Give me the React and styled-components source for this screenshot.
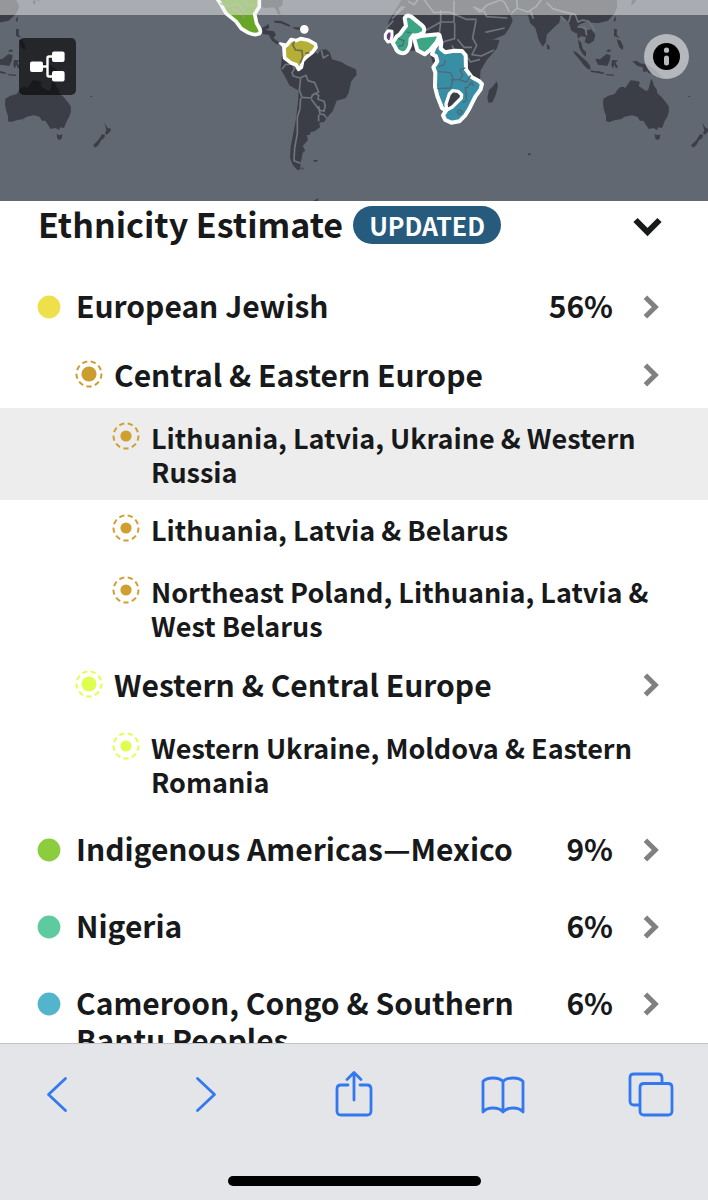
import React from "react";
import styled, { createGlobalStyle } from "styled-components";

const GlobalStyle = createGlobalStyle`
  *, *::before, *::after { box-sizing: border-box; }
  body {
    margin: 0;
    background: #fff;
    color: #17191b;
    font-family: "Noto Sans CJK SC", "Open Sans", sans-serif;
    font-weight: 700;
  }
  button {
    border: 0;
    margin: 0;
    padding: 0;
    background: none;
    color: inherit;
    font: inherit;
    text-align: left;
    cursor: pointer;
  }
  svg { display: block; }
`;

const Screen = styled.div`
  display: flex;
  flex-direction: column;
  height: 100vh;
  overflow: hidden;
`;

const MapPanel = styled.section`
  position: relative;
  flex: none;
  height: 201px;
  background: #616871;
`;

const MapDrawing = styled.svg`
  width: 100%;
  height: 100%;
`;

const StatusStrip = styled.div`
  position: absolute;
  inset: 0 0 auto 0;
  height: 15px;
  background: rgba(241, 240, 239, 0.5);
`;

const TreeButton = styled.button`
  position: absolute;
  top: 38px;
  left: 19px;
  display: grid;
  place-items: center;
  width: 57px;
  height: 57px;
  border-radius: 5px;
  background: rgba(10, 10, 12, 0.7);
`;

const InfoButton = styled.button`
  position: absolute;
  top: 34px;
  right: 19px;
  display: grid;
  place-items: center;
  width: 45px;
  height: 45px;
  border-radius: 50%;
  background: rgba(212, 214, 218, 0.72);
`;

const Results = styled.main`
  flex: 1;
  min-height: 0;
  overflow: hidden;
`;

const Header = styled.header`
  display: flex;
  align-items: center;
  gap: 10px;
  padding: 3px 46px 21px 38px;
`;

const Title = styled.h1`
  margin: 0 0 2px;
  font-size: 34px;
  line-height: 40px;
`;

const Badge = styled.span`
  padding: 0 16px;
  border-radius: 19px;
  background: #265b7e;
  color: #fff;
  font-size: 25px;
  line-height: 38px;
`;

const CollapseButton = styled.button`
  margin: 4px 0 0 auto;
`;

const List = styled.ul`
  margin: 0;
  padding: 0;
  list-style: none;
`;

const levels = {
  1: { size: 30, line: 37, pad: "20px 48px 20px 37px", min: 77, gap: 15, icon: 8, chevron: 8 },
  2: { size: 30, line: 37, pad: "12px 48px 15px 75px", min: 64, gap: 11, icon: 4, chevron: 7 },
  3: { size: 27, line: 34, pad: "13px 48px 11px 112px", min: 62, gap: 11, icon: 1, chevron: 0 },
};

const Row = styled.button`
  display: flex;
  align-items: flex-start;
  width: 100%;
  gap: ${(p) => levels[p.$level].gap}px;
  min-height: ${(p) => levels[p.$level].min}px;
  padding: ${(p) => levels[p.$level].pad};
  background: ${(p) => (p.$selected ? "#ededed" : "transparent")};
  font-size: ${(p) => levels[p.$level].size}px;
  line-height: ${(p) => levels[p.$level].line}px;
`;

const Marker = styled.span`
  flex: none;
  padding-top: ${(p) => levels[p.$level].icon}px;
`;

const Name = styled.span`
  flex: 1;
`;

const Percent = styled.span`
  flex: none;
  margin-right: 15px;
`;

const Chevron = styled.span`
  flex: none;
  padding-top: ${(p) => levels[p.$level].chevron}px;
`;

const Toolbar = styled.footer`
  flex: none;
  display: flex;
  flex-direction: column;
  align-items: center;
  gap: 58px;
  padding: 26px 33px 14px;
  border-top: 1px solid #c3c4c6;
  background: #e3e5e8;
`;

const ToolbarButtons = styled.nav`
  display: flex;
  justify-content: space-between;
  width: 100%;
`;

const ToolButton = styled.button`
  display: grid;
  place-items: center;
  width: 48px;
  height: 48px;
`;

const HomeBar = styled.div`
  width: 253px;
  height: 10px;
  border-radius: 5px;
  background: #000;
`;

const regions = [
  { level: 1, name: "European Jewish", percent: "56%", color: "#eee04a" },
  { level: 2, name: "Central & Eastern Europe", color: "#cb9c2e" },
  { level: 3, name: "Lithuania, Latvia, Ukraine & Western Russia", color: "#cf9f30", selected: true },
  { level: 3, name: "Lithuania, Latvia & Belarus", color: "#cf9f30" },
  { level: 3, name: "Northeast Poland, Lithuania, Latvia & West Belarus", color: "#cf9f30" },
  { level: 2, name: "Western & Central Europe", color: "#dfff4f" },
  { level: 3, name: "Western Ukraine, Moldova & Eastern Romania", color: "#dfff4f" },
  { level: 1, name: "Indigenous Americas—Mexico", percent: "9%", color: "#8bcd3c" },
  { level: 1, name: "Nigeria", percent: "6%", color: "#5dcaa0" },
  { level: 1, name: "Cameroon, Congo & Southern Bantu Peoples", percent: "6%", color: "#53b5cc" },
];

function RegionMarker({ level, color }) {
  if (level === 1) {
    return (
      <svg width="24" height="24" viewBox="0 0 24 24" aria-hidden="true">
        <circle cx="12" cy="12" r="11.4" fill={color} />
      </svg>
    );
  }
  return (
    <svg width="28" height="28" viewBox="0 0 28 28" aria-hidden="true">
      <circle cx="14" cy="14" r={level === 2 ? 7.6 : 5.6} fill={color} />
      <circle
        cx="14" cy="14" r="12.5" fill="none" stroke={color} strokeWidth="2"
        pathLength="90" strokeDasharray="6 4" transform="rotate(-2 14 14)"
      />
    </svg>
  );
}

function RegionRow({ level, name, percent, color, selected }) {
  return (
    <li>
      <Row $level={level} $selected={selected}>
        <Marker $level={level}><RegionMarker level={level} color={color} /></Marker>
        <Name>{name}</Name>
        {percent && <Percent>{percent}</Percent>}
        {level < 3 && (
          <Chevron $level={level}>
            <svg width="17" height="24" viewBox="0 0 17 24" aria-hidden="true">
              <path d="M2.4 2.2L12.3 12L2.4 21.8" fill="none" stroke="#808080" strokeWidth="5" />
            </svg>
          </Chevron>
        )}
      </Row>
    </li>
  );
}

function Oceania() {
  return (
    <g fill="#3b3e46">
      <path d="M394 296L408 288L428 282L436 270L444 262L454 260L460 264L468 252L476 241L490 242L504 246L500 258L512 266L524 274L530 266L534 250L537 236L542 244L546 258L554 268L556 280L568 290L578 302L590 318L591 334L586 350L578 364L570 384L558 382L556 390L544 384L530 387L522 374L514 362L504 362L496 350L480 346L458 350L446 358L430 360L412 366L402 364L402 348L396 330L393 312Z" />
      <path d="M548 402L557 406L565 403L563 416L556 420L550 416Z" />
      <path d="M691 368L697 378L701 384L712 387L707 396L699 404L693 401L697 390Z" />
      <path d="M684 402L694 406L690 415L681 421L674 434L664 443L657 436L665 428L674 419Z" />
      <path d="M302 153L314 157L330 172L344 184L354 196L356 209L346 206L334 194L322 178L310 164Z" />
      <path d="M354 211L368 213L382 214L397 218L394 222L376 219L358 216Z" />
      <path d="M370 176L384 178L396 168L404 162L416 166L413 182L406 198L392 196L378 194Z" />
      <path d="M402 152L412 148L418 154L408 156ZM420 180L438 181L430 188L438 200L432 206L427 194L422 206L418 194Z" />
      <path d="M480 184L496 183L504 190L526 194L542 204L556 216L570 230L562 232L544 220L530 220L526 214L514 216L512 202L496 198L488 190Z" />
      <path d="M426 86L435 88L434 104L443 114L436 112L426 108ZM434 118L446 122L454 140L452 150L442 142L438 130ZM425 60L431 48L432 60L427 66Z" />
      <path d="M400 222L428 224L424 228L404 226ZM648 288L656 288L652 292ZM168 460L177 461L174 466L168 464Z" />
    </g>
  );
}

function WorldMap() {
  return (
    <MapDrawing viewBox="0 0 708 201" preserveAspectRatio="xMidYMid slice" role="img" aria-label="World map of ethnicity regions">
      <g transform="translate(472 0) scale(0.3333)"><Oceania /></g>
      <g transform="translate(-126 0) scale(0.3333)">
        <Oceania />
        <path d="M300 -6H424L436 20L426 42L404 62L376 68L340 66Z" fill="#3b3e46" />
        <path d="M477 0L486 4L482 14L477 10ZM488 -2L498 2L492 4Z" fill="#3b3e46" />
      </g>

      {/* Southern Asia and the Arabian Peninsula */}
      <g transform="translate(472 0) scale(0.3333)" fill="#3b3e46" stroke="#70747c" strokeWidth="5" strokeLinejoin="round">
        <path d="M-4 -6H96L122 62L112 84L98 104L64 118L42 116L34 94L12 56L-4 40Z" stroke="none" />
        <path d="M84 -6H434L436 20L428 40L408 62L378 70L340 66L320 74L322 100L312 100L298 92L290 66L266 48L262 68L248 80L224 104L222 126L212 140L200 120L190 84L174 68L168 46L124 46L100 38L84 22Z" stroke="none" />
        <path d="M312 84L326 78L340 92L358 88L370 104L366 122L350 132L338 126L342 112L328 108L318 116Z" stroke="none" />
        <path d="M134 -4L136 24L118 40M134 24L168 36L192 20L210 -4M176 34L184 56M224 8L242 26L270 34L310 44L318 66L332 60L350 64L360 78L368 94M0 18L38 36L44 50L106 54M12 56L36 98L98 84M316 80L340 84L344 106M84 -2L98 8L112 36M266 48L280 62M298 40L290 66" fill="none" />
        <path d="M0 112L30 104L44 124L82 122L74 146L54 168L34 188L30 206L0 200Z" stroke="none" />
        <path d="M0 134L20 110M0 160L34 162L54 150M30 166L32 196" fill="none" />
        <path d="M318 118L328 128L332 146L342 156L342 170L332 162L322 144Z" stroke="none" />
        <path d="M224 132L231 136L234 148L226 148Z" stroke="none" />
        <path d="M480 -6L496 -4L488 8L478 18Z" stroke="none" />
      </g>

      {/* Africa and Madagascar */}
      <g transform="translate(370 0) scale(0.3333)" fill="#3b3e46" stroke="#70747c" strokeWidth="5" strokeLinejoin="round">
        <path d="M98 -6H310L322 40L344 84L350 116L388 120L380 144L352 178L332 210L330 238L300 260L210 240L190 194L180 160L160 150L104 154L60 116L50 96L56 64Z" stroke="none" />
        <path d="M104 20L66 56M160 -4L192 38L238 36L288 58H320M252 2V66H212L166 92M212 30V66L208 100L218 126L254 116L254 68M318 62L308 114L320 136L306 164L334 168L372 150M262 118L282 142L306 142M288 166L302 186L330 178M246 136L258 160M70 62L46 88M98 18L76 40M114 4L132 14L146 -4M310 20L330 36L350 16L392 0" fill="none" />
        <path d="M380 244L384 258L378 282L368 306L356 309L352 294L357 270L370 258Z" stroke="none" />
      </g>
      <g transform="translate(370 0) scale(0.3333)" stroke="#fff" strokeWidth="12" strokeLinejoin="round">
        <path d="M46 104L54 92L66 94L66 108L62 124L54 126L46 116Z" fill="#65388d" strokeWidth="9" />
        <path d="M104 54Q112 42 124 50L156 76Q166 84 161 97Q146 108 130 106L122 116L120 136Q112 160 98 160Q80 158 76 142L68 128L80 110L90 102L100 88L108 78Z" fill="#3ca584" />
        <path d="M132 114L152 108L204 103L208 108L200 126L180 150L164 163L142 151Z" fill="#3ca584" />
        <path d="M208 104L214 128L212 146L226 157L252 152L276 153L287 166L288 208L306 232L327 243L336 252L332 268L316 290L298 326L286 346L268 364L244 368L226 360L219 346L228 332L216 324L202 288L195 260L196 218L190 202L202 184L198 169L186 162L194 142L208 126Z" fill="#388fa5" />
        <path d="M230 330L228 312L238 282L248 272L264 274L275 284L274 294L262 306L246 322Z" fill="#3b3e46" strokeWidth="10" />
        <path d="M206 200L222 194L226 180M206 215L242 218L250 236L242 264L202 266M242 240L270 238L278 226L270 210L286 204M270 240L290 246L302 226M284 262L292 264L300 250L314 258M286 266L290 302L278 308M304 242L310 256M266 330L278 334L270 344L262 336ZM84 116L102 122L98 136L84 140M110 96L122 98" fill="none" stroke="#4e6875" strokeWidth="4" />
      </g>

      {/* The Americas */}
      <g transform="translate(200 0) scale(0.3333)" fill="#3b3e46" stroke="#70747c" strokeWidth="5" strokeLinejoin="round">
        <path d="M174 -6H250L246 18L236 22L242 46L234 42L224 22L194 24L176 18Z" stroke="none" />
        <path d="M186 84L206 72L208 84L196 90L222 94L228 104L220 114L236 126L232 134L216 122L206 104L188 102Z" stroke="none" />
        <path d="M222 62L242 62L272 76L268 80L242 70L224 68ZM276 82L300 82L300 90L286 88Z" stroke="none" />
        <path d="M246 168L258 180L276 188L298 202L318 180L344 156L354 162L360 150L378 148L390 158L396 178L424 186L440 196L468 208L470 224L454 244L446 278L438 294L410 302L398 334L382 352L372 366L358 368L360 382L344 394L332 396L330 404L320 406L324 420L308 438L316 452L308 458L306 470L302 490L300 510L292 510L278 494L270 474L272 440L280 400L288 356L294 304L296 272L268 256L256 232L242 208Z" stroke="none" />
        <path d="M246 208L256 194L276 192M276 190L284 206L276 218L280 228L300 234L318 226L324 242L344 248L356 276L338 284L334 294L306 292L298 270L302 236M334 290L344 280L356 286L354 298L372 304L376 318L372 334L358 330L334 298M356 318L360 342L372 344L380 354M302 294L300 326L292 352V400L284 444L282 482L302 490M356 364L356 344M364 150L370 174L386 164" fill="none" />
        <path d="M306 500L312 508L304 508ZM340 480H354L350 485H342ZM340 602L356 594L352 606Z" stroke="none" />
      </g>
      <g transform="translate(200 0) scale(0.3333)" stroke="#fff" strokeWidth="11" strokeLinejoin="round">
        <path d="M46 -12L62 12L78 40L108 64L124 86L144 98Q164 108 178 101Q184 95 178 84L170 70L164 42L178 20V-12Z" fill="#68a626" />
        <path d="M252 142L262 134L273 119L288 122L302 116L326 121L346 132L348 142L338 156L318 172L308 182L304 202L296 208L288 194L272 188L254 174Z" fill="#b5af35" />
        <path d="M240 130L262 134L252 142Z" fill="#fff" strokeWidth="6" />
        <circle cx="313" cy="88" r="9" fill="#fff" strokeWidth="8" />
        <path d="M60 10L86 20L104 10L120 18L140 46M96 24L120 38L134 56M130 4L142 14L166 16" fill="none" stroke="#8a9b72" strokeWidth="4" />
        <path d="M284 124L278 134L286 150L306 152L308 172L300 190M316 160L328 158" fill="none" stroke="#6d6b48" strokeWidth="5" />
      </g>
    </MapDrawing>
  );
}

const lineIcon = { fill: "none", stroke: "#3478f0", strokeWidth: 2.8, strokeLinecap: "round", strokeLinejoin: "round" };

const tools = [
  { label: "Back", paths: "M32.5 8.5L15.5 24.5L32.5 40.5" },
  { label: "Forward", paths: "M15.5 8.5L32.5 24.5L15.5 40.5" },
  { label: "Share", paths: "M18 15H11Q7 15 7 19V41Q7 45 11 45H37Q41 45 41 41V19Q41 15 37 15H30M24 30V3M17 9.5L24 2.5L31 9.5" },
  { label: "Bookmarks", paths: "M24 11.5Q21 8 14 8Q7 8 4 11.5V42Q7 38 14 38Q21 38 24 42Q27 38 34 38Q41 38 44 42V11.5Q41 8 34 8Q27 8 24 11.5V42" },
  { label: "Tabs", paths: "M13 35H7Q3 35 3 31V8Q3 4 7 4H31Q35 4 35 8V13M17 13.5H41Q45 13.5 45 17.5V41Q45 45 41 45H17Q13 45 13 41V17.5Q13 13.5 17 13.5Z" },
];

export default function App() {
  return (
    <Screen>
      <GlobalStyle />
      <MapPanel>
        <WorldMap />
        <StatusStrip />
        <TreeButton aria-label="View family tree">
          <svg width="35" height="31" viewBox="0 0 35 31" aria-hidden="true">
            <path d="M11 15.5H17.5M24 5.5H19Q17.5 5.5 17.5 7V24Q17.5 25.5 19 25.5H24" fill="none" stroke="#fff" strokeWidth="2.4" />
            <rect x="0" y="10.5" width="13" height="10.5" rx="2" fill="#fff" />
            <rect x="22" y="0.5" width="12.6" height="10.5" rx="2" fill="#fff" />
            <rect x="22" y="20" width="12.6" height="10.5" rx="2" fill="#fff" />
          </svg>
        </TreeButton>
        <InfoButton aria-label="Map information">
          <svg width="27" height="27" viewBox="0 0 27 27" aria-hidden="true">
            <circle cx="13.5" cy="13.5" r="13.5" fill="#000" />
            <circle cx="13.5" cy="7.2" r="2.6" fill="#b8bbc0" />
            <path d="M13.5 15V20" stroke="#b8bbc0" strokeWidth="5" strokeLinecap="round" />
          </svg>
        </InfoButton>
      </MapPanel>
      <Results>
        <Header>
          <Title>Ethnicity Estimate</Title>
          <Badge>UPDATED</Badge>
          <CollapseButton aria-label="Collapse ethnicity estimate">
            <svg width="29" height="20" viewBox="0 0 29 20" aria-hidden="true">
              <path d="M2.5 3L14.5 15L26.5 3" fill="none" stroke="#17191b" strokeWidth="6" />
            </svg>
          </CollapseButton>
        </Header>
        <List>
          {regions.map((region) => <RegionRow key={region.name} {...region} />)}
        </List>
      </Results>
      <Toolbar>
        <ToolbarButtons aria-label="Browser">
          {tools.map((tool) => (
            <ToolButton key={tool.label} aria-label={tool.label}>
              <svg width="48" height="48" viewBox="0 0 48 48" aria-hidden="true">
                <path d={tool.paths} {...lineIcon} />
              </svg>
            </ToolButton>
          ))}
        </ToolbarButtons>
        <HomeBar />
      </Toolbar>
    </Screen>
  );
}
